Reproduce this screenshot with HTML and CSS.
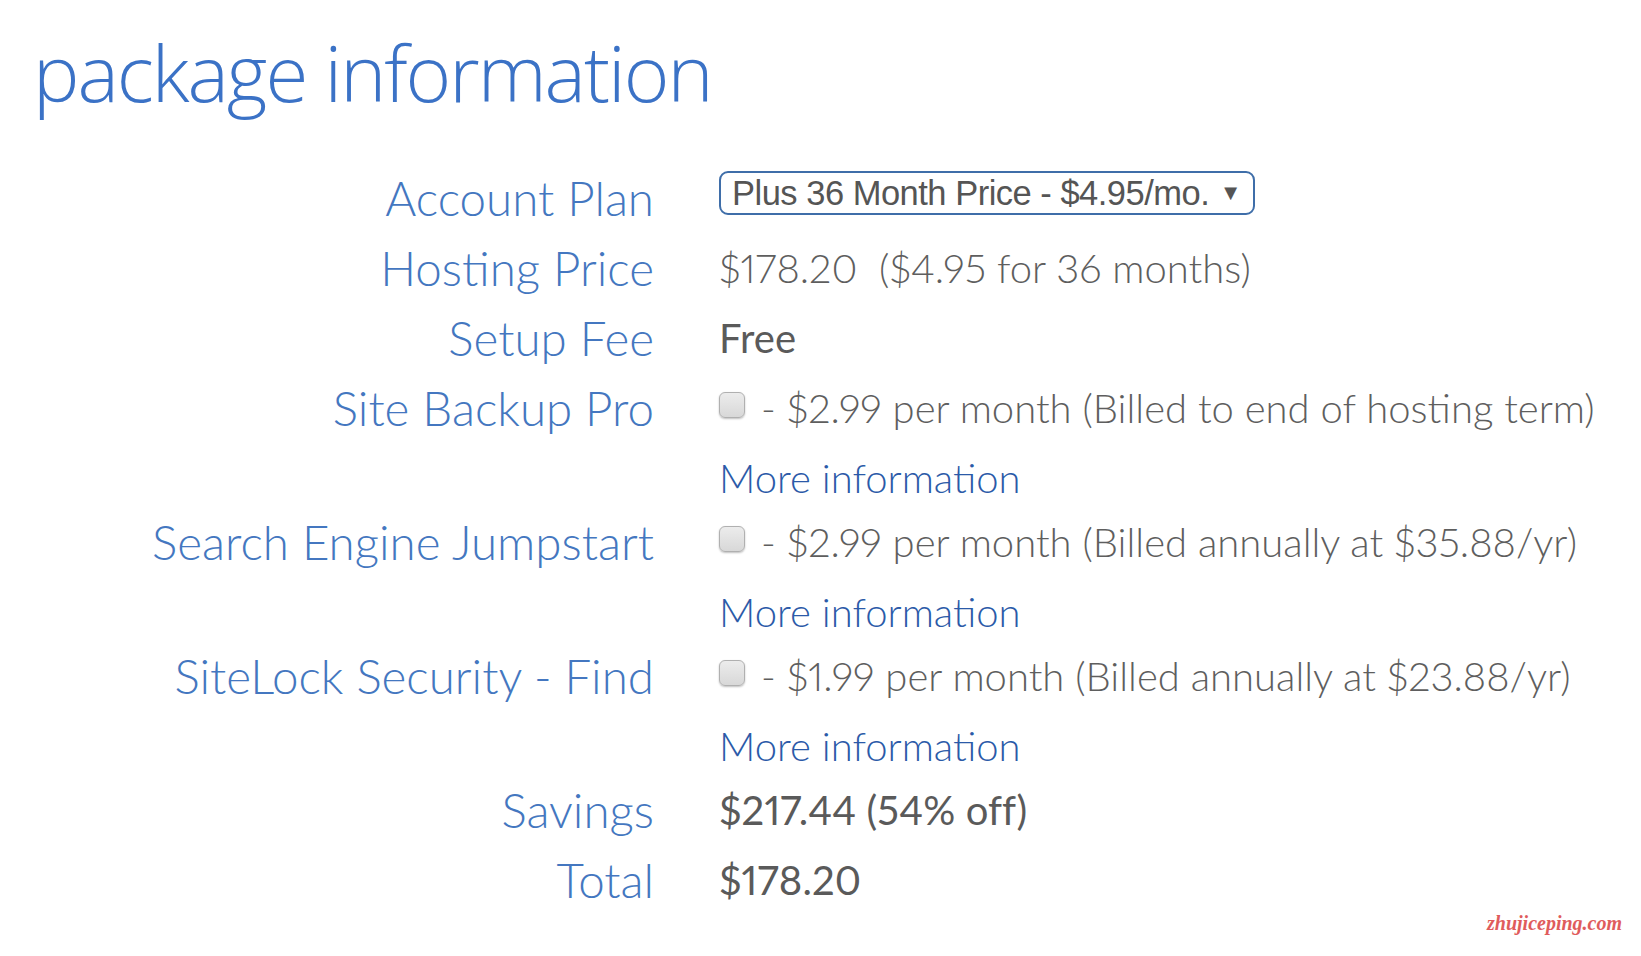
FILE: index.html
```html
<!DOCTYPE html>
<html>
<head>
<meta charset="utf-8">
<link rel="stylesheet" href="styles.css">
</head>
<body>
<div class="page">
  <h1 class="title">package information</h1>
  <div class="table">
    <div class="label">Account Plan</div>
    <div class="value">
      <div class="select"><span>Plus 36 Month Price - $4.95/mo.</span><span class="arrow">&#9660;</span></div>
    </div>

    <div class="label">Hosting Price</div>
    <div class="value">$178.20&nbsp; ($4.95 for 36 months)</div>

    <div class="label">Setup Fee</div>
    <div class="value strong">Free</div>

    <div class="label">Site Backup Pro</div>
    <div class="value"><span class="box"></span> - $2.99 per month (Billed to end of hosting term)</div>
    <div class="label more-row"></div>
    <div class="value more-row"><span class="more">More information</span></div>

    <div class="label">Search Engine Jumpstart</div>
    <div class="value"><span class="box"></span> - $2.99 per month (Billed annually at $35.88/yr)</div>
    <div class="label more-row"></div>
    <div class="value more-row"><span class="more">More information</span></div>

    <div class="label">SiteLock Security - Find</div>
    <div class="value"><span class="box"></span> - $1.99 per month (Billed annually at $23.88/yr)</div>
    <div class="label more-row"></div>
    <div class="value more-row"><span class="more">More information</span></div>

    <div class="label">Savings</div>
    <div class="value strong">$217.44 (54% off)</div>

    <div class="label">Total</div>
    <div class="value strong">$178.20</div>
  </div>
  <div class="watermark">zhujiceping.com</div>
</div>
</body>
</html>
```

FILE: styles.css
```css
html, body {
  margin: 0;
  padding: 0;
  background: #ffffff;
}
.page {
  position: relative;
  width: 1641px;
  height: 956px;
  overflow: hidden;
  font-family: "Lato", "Open Sans", sans-serif;
}
.title {
  margin: 0;
  padding: 22px 0 0 33px;
  font-family: "Open Sans", sans-serif;
  font-weight: 300;
  font-size: 78px;
  line-height: 100px;
  color: #3b72c6;
  letter-spacing: -2px;
}
.table {
  display: grid;
  grid-template-columns: 654px 1fr;
  column-gap: 65px;
  margin-top: 41px;
}
.label {
  text-align: right;
  font-weight: 300;
  font-size: 47.5px;
  line-height: 70px;
  height: 70px;
  color: #4477c0;
  white-space: nowrap;
}
.value {
  font-weight: 300;
  font-size: 40px;
  line-height: 70px;
  height: 70px;
  color: #5e5e5e;
  white-space: nowrap;
  display: flex;
  align-items: center;
  font-variant-numeric: proportional-nums;
}
.value.strong {
  font-weight: 400;
  color: #5a5a5a;
  letter-spacing: 0.1px;
}
.label.more-row {
  height: 64px;
}
.value.more-row {
  height: 64px;
  align-items: flex-start;
  padding-top: 0;
  box-sizing: border-box;
}
.more {
  color: #2b5aa8;
  font-weight: 300;
  font-size: 40px;
  line-height: 70px;
}
.box {
  display: inline-block;
  width: 26px;
  height: 26px;
  box-sizing: border-box;
  border: 1.5px solid #b0b0b0;
  border-radius: 6px;
  background: linear-gradient(#ececec, #d8d8d8);
  box-shadow: 0 1px 2px rgba(0,0,0,0.25);
  margin-right: 16px;
  margin-top: -6px;
}
.select {
  display: flex;
  align-items: center;
  justify-content: space-between;
  width: 536px;
  height: 44px;
  box-sizing: border-box;
  border: 2.5px solid #3f6ea9;
  border-radius: 9px;
  padding: 0 12px 0 11px;
  font-family: "Liberation Sans", Arial, sans-serif;
  font-size: 34.5px;
  letter-spacing: -0.5px;
  color: #555555;
  font-weight: 400;
  margin-top: -11px;
}
.arrow {
  font-size: 22px;
  color: #555;
}
.watermark {
  position: absolute;
  left: 1487px;
  top: 912px;
  font-family: "Liberation Serif", serif;
  font-style: italic;
  font-weight: 700;
  font-size: 20px;
  color: #e05c5c;
}
```
